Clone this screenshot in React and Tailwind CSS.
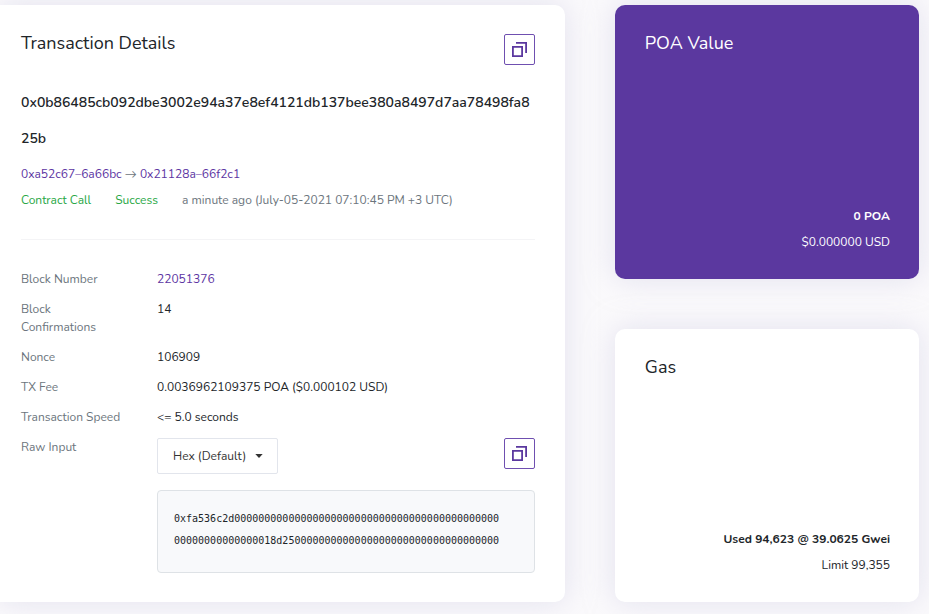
import React from "react";

const rows = [
  { label: "Block Number", value: "22051376", link: true },
  { label: "Block Confirmations", value: "14" },
  { label: "Nonce", value: "106909" },
  { label: "TX Fee", value: "0.0036962109375 POA ($0.000102 USD)" },
  { label: "Transaction Speed", value: "<= 5.0 seconds" },
];

const rawInput = [
  "0xfa536c2d" + "0".repeat(44),
  "0".repeat(15) + "18d25" + "0".repeat(34),
];

function CopyButton({ label }) {
  return (
    <button
      type="button"
      aria-label={label}
      className="flex h-[31px] w-[31px] shrink-0 items-center justify-center rounded-xs border border-[#6f4fb0] bg-white text-[#5b389f]"
    >
      <svg width="15" height="15" viewBox="0 0 15 15" fill="none" stroke="currentColor" strokeWidth="1.8" aria-hidden="true">
        <path d="M0.9 4.9h9.2v9.2H0.9z" />
        <path d="M4 0.9h10.1V11" />
      </svg>
    </button>
  );
}

function SideCard({ title, strong, detail, className }) {
  return (
    <section
      className={
        "flex flex-1 flex-col justify-between rounded-[10px] pt-[29px] pr-[29px] pb-6 pl-[30px] shadow-[0_0_30px_0_rgba(202,199,226,0.5)] " +
        className
      }
    >
      <h2 className="text-lg leading-[18px]">{title}</h2>
      <div className="text-right leading-[26px]">
        <p className="font-bold">{strong}</p>
        <p>{detail}</p>
      </div>
    </section>
  );
}

export default function App() {
  return (
    <main className="grid min-h-screen grid-cols-[minmax(0,13fr)_minmax(0,7fr)] gap-[50px] overflow-hidden bg-[#fbfafc] pt-[5px] pr-[10px] pb-3 font-['Nunito','Lato',sans-serif] text-xs text-[#212529]">
      <section className="rounded-r-[10px] bg-white pt-[29px] pr-[30px] pb-[29px] pl-[21px] shadow-[0_0_30px_0_rgba(202,199,226,0.5)]">
        <div className="flex items-start justify-between">
          <h1 className="text-lg leading-[18px]">Transaction Details</h1>
          <CopyButton label="Copy transaction hash" />
        </div>

        <h2 className="mt-5 text-sm leading-9 font-semibold break-all">
          0x0b86485cb092dbe3002e94a37e8ef4121db137bee380a8497d7aa78498fa825b
        </h2>

        <div className="mt-1 leading-[26px] text-[#6c757d]">
          <p>
            <a href="#from" className="text-[#5c34a2]">0xa52c67–6a66bc</a>
            {" → "}
            <a href="#to" className="text-[#5c34a2]">0x21128a–66f2c1</a>
          </p>
          <p className="flex gap-6">
            <span className="text-[#28a745]">Contract Call</span>
            <span className="text-[#28a745]">Success</span>
            <span>a minute ago (July-05-2021 07:10:45 PM +3 UTC)</span>
          </p>
        </div>

        <hr className="mt-[26px] mb-[30px] border-[#f4f4f6]" />

        <dl className="grid grid-cols-[106px_minmax(0,1fr)] gap-x-[30px] gap-y-3 leading-[18px]">
          {rows.map((row) => (
            <React.Fragment key={row.label}>
              <dt className="text-[#6c757d]">{row.label}</dt>
              <dd>
                {row.link ? (
                  <a href="#block" className="text-[#5c34a2]">{row.value}</a>
                ) : (
                  row.value
                )}
              </dd>
            </React.Fragment>
          ))}
          <dt className="text-[#6c757d]">
            <label htmlFor="encoding">Raw Input</label>
          </dt>
          <dd>
            <div className="flex items-start justify-between">
              <div className="relative">
                <select
                  id="encoding"
                  className="h-9 w-[121px] appearance-none rounded-xs border border-[#e2e5ec] bg-white pl-[15px] text-xs text-[#333]"
                >
                  <option>Hex (Default)</option>
                  <option>UTF-8</option>
                </select>
                <svg
                  className="pointer-events-none absolute top-4 right-[15px]"
                  width="8"
                  height="4"
                  viewBox="0 0 8 4"
                  aria-hidden="true"
                >
                  <path d="M0.3 0h7.4L4 4z" fill="#333" />
                </svg>
              </div>
              <CopyButton label="Copy raw input" />
            </div>
            <pre className="mt-4 overflow-hidden rounded-sm border border-[#dee2e6] bg-[#f8f9fb] px-4 pt-[17px] pb-5 font-['DejaVu_Sans_Mono',monospace] text-[10px] leading-[22px]">
              {rawInput.join("\n")}
            </pre>
          </dd>
        </dl>
      </section>

      <div className="flex flex-col gap-[50px]">
        <SideCard title="POA Value" strong="0 POA" detail="$0.000000 USD" className="bg-[#5b389f] text-white" />
        <SideCard title="Gas" strong="Used 94,623 @ 39.0625 Gwei" detail="Limit 99,355" className="bg-white" />
      </div>
    </main>
  );
}
